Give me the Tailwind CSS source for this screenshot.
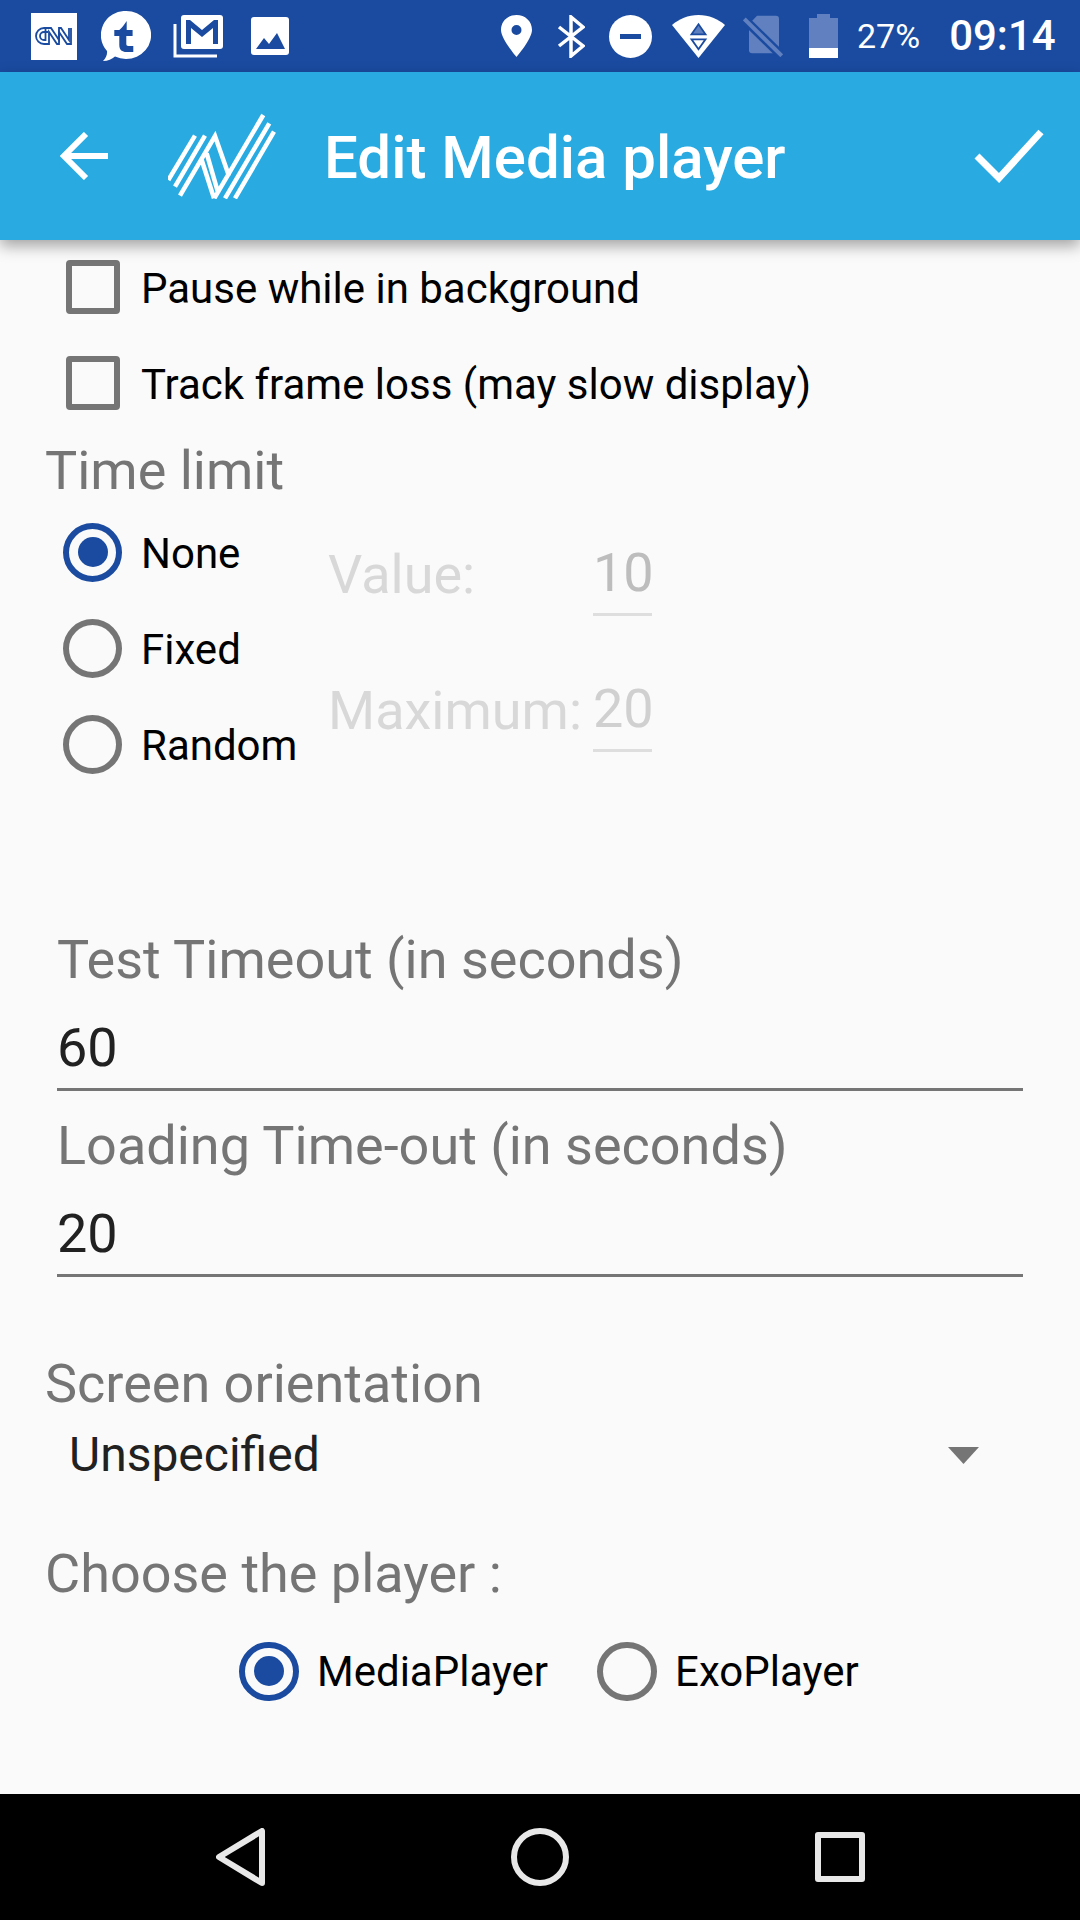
<!DOCTYPE html>
<html lang="en">
<head>
<meta charset="UTF-8" />
<title>Edit Media player</title>
<script src="https://cdn.jsdelivr.net/npm/@tailwindcss/browser@4"></script>
</head>
<body class="w-[1080px] h-[1920px] overflow-hidden bg-[#fafafa] font-['Roboto',sans-serif]">
<div class="flex flex-col h-[1920px]">

  <!-- status bar -->
  <div class="h-[72px] bg-[#1a4ba0] flex items-center text-white shrink-0">
    <div class="ml-[31px] w-[46px] h-[47px] bg-white flex items-center justify-center">
      <svg width="38" height="18" viewBox="0 0 38 18" fill="none" stroke="#1a4ba0" stroke-width="1.800"><path d="M13 1H9a8 8 0 0 0 0 16h5V5l8 12h2V5l8 12h4V1"/><path d="M13 5H9a4 4 0 0 0 0 8h1.500V1h5.500l8 12V1h2l8 12V1"/></svg>
    </div>
    <svg class="ml-[24px]" width="50" height="50" viewBox="0 0 50 50"><path d="M25 0a25 24 0 1 1-11 45.500C11 48 7 50 2 50c3-3 4.500-7 4-10A24 24 0 0 1 25 0z" fill="#fff"/><path d="M18.300 19H13.300v6h5V34c0 5 3 7 7 7h7v-6h-5c-1.300 0-2-.7-2-2V25h6.300v-6H25.700V10C23 14 21 17 18.300 19z" fill="#1a4ba0"/></svg>
    <svg class="ml-[22px]" width="50" height="43" viewBox="0 0 50 43"><path d="M2 9v32h42" fill="none" stroke="#fff" stroke-width="3"/><rect x="8" y="0" width="42" height="34" rx="3" fill="#fff"/><path d="M13 29V5h4l12 10 12-10h4v24h-5V13L29 22 18 13v16z" fill="#1a4ba0"/></svg>
    <svg class="ml-[28px]" width="38" height="38" viewBox="0 0 38 38"><rect width="38" height="38" rx="3" fill="#fff"/><path d="M5 32l8-11 5 6 8-11 8 16z" fill="#1a4ba0"/></svg>
    <svg class="ml-[212px]" width="31" height="42" viewBox="0 0 31 42"><path fill-rule="evenodd" d="M15.500 0C7 0 0 6 0 15c0 9 15.500 27 15.500 27S31 24 31 15C31 6 24 0 15.500 0zm0 10a5 5 0 1 1 0 10 5 5 0 0 1 0-10z" fill="#fff"/></svg>
    <svg class="ml-[25px]" width="28" height="43" viewBox="0 0 28 43" fill="none" stroke="#fff" stroke-width="3.500"><path d="M2 12l24 19-12 10V2l12 10L2 31"/></svg>
    <svg class="ml-[24px]" width="43" height="43" viewBox="0 0 43 43"><circle cx="21.500" cy="21.500" r="21.500" fill="#fff"/><rect x="11" y="19" width="21" height="5" fill="#1a4ba0"/></svg>
    <svg class="ml-[20px]" width="53" height="43" viewBox="0 0 53 43"><path d="M26.500 43L0 10C7 4 16 0 26.500 0S46 4 53 10z" fill="#fff"/><path d="M26.500 9.300l7 10h-14z" fill="#5e7fbd" stroke="#1a4ba0" stroke-width="1.800"/><path d="M19.500 24.300h14l-7 10z" fill="#fff" stroke="#1a4ba0" stroke-width="1.800"/></svg>
    <svg class="ml-[18px]" width="40" height="42" viewBox="0 0 40 42"><path d="M14 .7h19a3 3 0 0 1 3 3v34.600H9a3 3 0 0 1-3-3V9z" fill="#6080bf"/><path d="M0 3l40 39" stroke="#1a4ba0" stroke-width="9"/><path d="M1.300 4l37.400 36.700" stroke="#6080bf" stroke-width="4"/></svg>
    <div class="ml-[26px] w-[29px] h-[44px] flex flex-col items-center">
      <div class="w-[13px] h-[4px] bg-[#6080bf]"></div>
      <div class="w-[29px] h-[30px] bg-[#6080bf]"></div>
      <div class="w-[29px] h-[10px] bg-white"></div>
    </div>
    <span class="ml-[19px] text-[34px] leading-none">27%</span>
    <span class="ml-[29px] text-[42px] leading-none font-medium">09:14</span>
  </div>

  <!-- app bar -->
  <div class="h-[168px] bg-[#29abe2] flex items-center text-white shrink-0 relative z-10 shadow-[0_6px_14px_rgba(0,0,0,0.35)]">
    <svg class="ml-[60px]" width="48" height="48" viewBox="0 0 48 48" fill="none" stroke="#fff" stroke-width="6"><path d="M48 24H4M26 2L4 24l22 22"/></svg>
    <svg class="ml-[60px]" width="108" height="86" viewBox="0 0 108 86" fill="none" stroke="#fff" stroke-width="4.500"><path d="M.3 67L27 22.700M7 73.700L37 22.700M12 82.700L47 23l14 40M38.700 40.300l11.600 40M33.700 47L46 85.300M46.300 85.300L95.300 2M57 85.300L101.300 10.300M67 85.300L106 18.700"/></svg>
    <span class="ml-[48px] mt-[4px] text-[60px] leading-none font-medium">Edit Media player</span>
    <svg class="ml-auto mr-[36px]" width="70" height="54" viewBox="0 0 70 54" fill="none" stroke="#fff" stroke-width="7"><path d="M3 27l22 22L67 3"/></svg>
  </div>

  <!-- form -->
  <div class="flex-1 flex flex-col">
    <div class="h-[96px] flex items-center pl-[66px]">
      <div class="w-[54px] h-[54px] border-[6px] border-[#757575] rounded-[4px] mb-[2px]"></div>
      <span class="ml-[21px] mt-[2px] text-[42px] leading-none text-black">Pause while in background</span>
    </div>
    <div class="h-[96px] flex items-center pl-[66px]">
      <div class="w-[54px] h-[54px] border-[6px] border-[#757575] rounded-[4px] mb-[2px]"></div>
      <span class="ml-[21px] mt-[2px] text-[42px] leading-none text-black">Track frame loss (may slow display)</span>
    </div>
    <div class="pl-[45px] text-[54px] leading-[64px] text-[#757575] mt-[7px]">Time limit</div>

    <div class="flex mt-[3px]">
      <div class="w-[328px] pl-[63px] flex flex-col">
        <div class="h-[96px] flex items-center"><div class="w-[59px] h-[59px] mb-[4px] rounded-full border-[6px] border-[#1a4ba0] flex items-center justify-center"><div class="w-[30px] h-[30px] rounded-full bg-[#1a4ba0]"></div></div><span class="ml-[19px] text-[42px] leading-none text-black">None</span></div>
        <div class="h-[96px] flex items-center"><div class="w-[59px] h-[59px] mb-[4px] rounded-full border-[6px] border-[#757575]"></div><span class="ml-[19px] text-[42px] leading-none text-black">Fixed</span></div>
        <div class="h-[96px] flex items-center"><div class="w-[59px] h-[59px] mb-[4px] rounded-full border-[6px] border-[#757575]"></div><span class="ml-[19px] text-[42px] leading-none text-black">Random</span></div>
      </div>
      <div class="flex flex-col pt-[12px]">
        <div class="flex items-end h-[98px] text-[54px]">
          <span class="w-[265px] leading-[60px] pb-[11px] text-[#d8d8d8]">Value:</span>
          <span class="w-[59px] border-b-[3px] border-[#dedede] leading-[60px] pb-[10px] text-center text-[#bdbdbd]">10</span>
        </div>
        <div class="flex items-end h-[136px] text-[54px]">
          <span class="w-[265px] leading-[60px] pb-[11px] text-[#d8d8d8]">Maximum:</span>
          <span class="w-[59px] border-b-[3px] border-[#dedede] leading-[60px] pb-[10px] text-center text-[#d0d0d0]">20</span>
        </div>
      </div>
    </div>

    <div class="mt-[134px] mx-[57px] text-[54px]">
      <div class="leading-[64px] text-[#757575]">Test Timeout (in seconds)</div>
      <div class="h-[64px] mt-[24px] leading-[64px] text-[#212121] border-b-[3px] border-[#757575] box-content pb-[8px]">60</div>
      <div class="leading-[64px] text-[#757575] mt-[23px]">Loading Time-out (in seconds)</div>
      <div class="h-[64px] mt-[24px] leading-[64px] text-[#212121] border-b-[3px] border-[#757575] box-content pb-[8px]">20</div>
    </div>

    <div class="pl-[45px] text-[54px] leading-[64px] text-[#757575] mt-[75px]">Screen orientation</div>
    <div class="flex items-center pl-[69px] pr-[101px] mt-[7px] h-[64px]">
      <span class="text-[48px] leading-none text-[#212121]">Unspecified</span>
      <svg class="ml-auto" width="31" height="17" viewBox="0 0 31 17"><path d="M0 0h31L15.500 17z" fill="#757575"/></svg>
    </div>
    <div class="pl-[45px] text-[54px] leading-[64px] text-[#757575] mt-[55px]">Choose the player :</div>

    <div class="flex items-center pl-[239px] mt-[36px] h-[60px]">
      <div class="w-[60px] h-[59px] mb-[2px] rounded-full border-[6px] border-[#1a4ba0] flex items-center justify-center"><div class="w-[30px] h-[30px] rounded-full bg-[#1a4ba0]"></div></div>
      <span class="ml-[18px] text-[42px] leading-none text-black">MediaPlayer</span>
      <div class="ml-[49px] w-[60px] h-[59px] mb-[2px] rounded-full border-[6px] border-[#757575]"></div>
      <span class="ml-[18px] text-[42px] leading-none text-black">ExoPlayer</span>
    </div>
  </div>

  <!-- nav bar -->
  <div class="h-[126px] bg-black flex items-center shrink-0">
    <svg class="ml-[216px]" width="50" height="58" viewBox="0 0 50 58" fill="none" stroke="#e8e8e8" stroke-width="6" stroke-linejoin="round"><path d="M46 3v52L3 29z"/></svg>
    <svg class="ml-[245px]" width="58" height="58" viewBox="0 0 58 58" fill="none" stroke="#e8e8e8" stroke-width="6"><circle cx="29" cy="29" r="26"/></svg>
    <div class="ml-[246px] w-[50px] h-[50px] border-[6px] border-[#e8e8e8] rounded-[3px]"></div>
  </div>
</div>
</body>
</html>
